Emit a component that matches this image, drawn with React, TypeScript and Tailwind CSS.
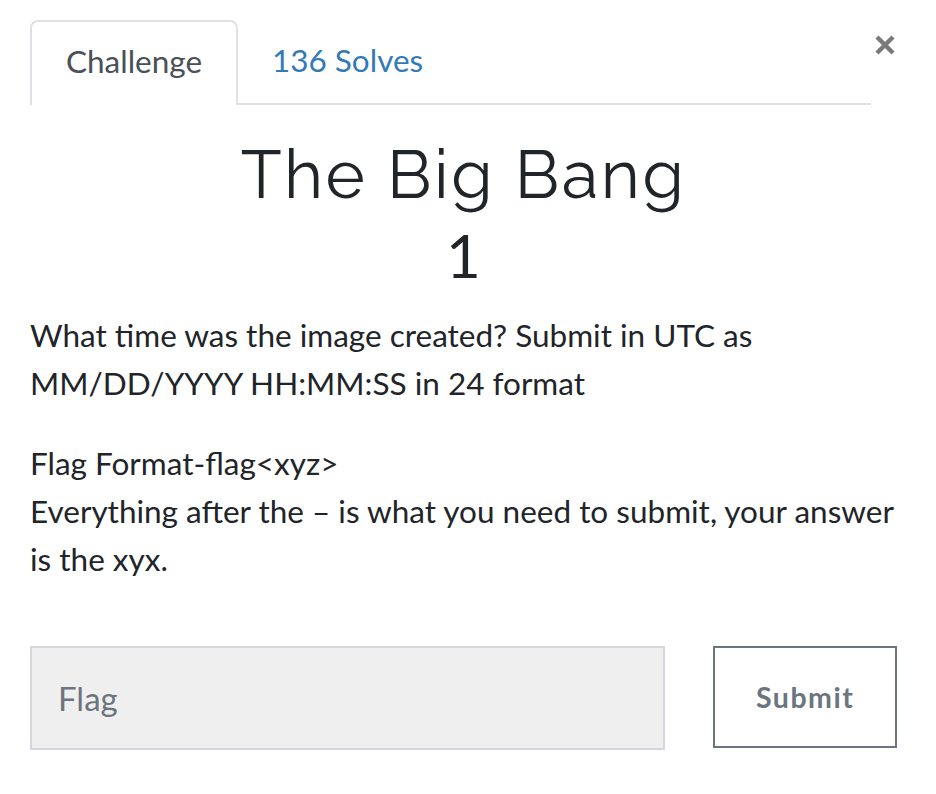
export default function App() {
  return (
    <div className="w-[936px] h-[794px] bg-white font-['Lato','Liberation_Sans',sans-serif] text-[#212529] pl-[30px] pr-[39px]">
      <div className="flex items-end pt-[20px]">
        <div className="flex flex-1 border-b-2 border-[#dee2e6] mr-[2px]">
          <div className="w-[208px] h-[85px] -mb-[2px] border-2 border-b-0 border-[#dee2e6] rounded-t-[8px] bg-white flex items-center justify-center text-[31.5px] text-[#495057] pb-[4px]">
            Challenge
          </div>
          <div className="h-[83px] pl-[34px] pb-[2px] flex items-center text-[31.5px] text-[#337ab7]">136 Solves</div>
        </div>
        <button className="self-start mt-[10px] w-[24px] h-[30px] flex items-center justify-center text-[#7a7a7a]">
          <svg width="22" height="22" viewBox="0 0 22 22">
            <path d="M3 3 L19 19 M19 3 L3 19" stroke="currentColor" strokeWidth="4.5" strokeLinecap="butt" />
          </svg>
        </button>
      </div>

      <h1 className="text-center font-['Raleway','Lato','Liberation_Sans',sans-serif] font-normal text-[67px] leading-[80px] mt-[30px] tracking-[2.5px]">
        The Big Bang
      </h1>
      <div className="text-center font-normal text-[60px] leading-[64px] mt-[8px]">1</div>

      <div className="text-[31.5px] leading-[48px] mt-[24px]">
        <p>What time was the image created? Submit in UTC as MM/DD/YYYY HH:MM:SS in 24 format</p>
        <p className="mt-[32px]">
          Flag Format-flag&lt;xyz&gt;
          <br />
          Everything after the – is what you need to submit, your answer is the xyx.
        </p>
      </div>

      <div className="flex gap-[48px] mt-[63px]">
        <input
          placeholder="Flag"
          className="w-[636px] h-[104px] bg-[#efefef] border-2 border-[#d3d7dc] px-[26px] text-[33px] placeholder:text-[#6c757d] outline-none"
        />
        <button className="w-[184px] h-[102px] border-2 border-[#6c757d] text-[#6c757d] text-[28.5px] font-bold tracking-[1.5px]">
          Submit
        </button>
      </div>
    </div>
  )
}
